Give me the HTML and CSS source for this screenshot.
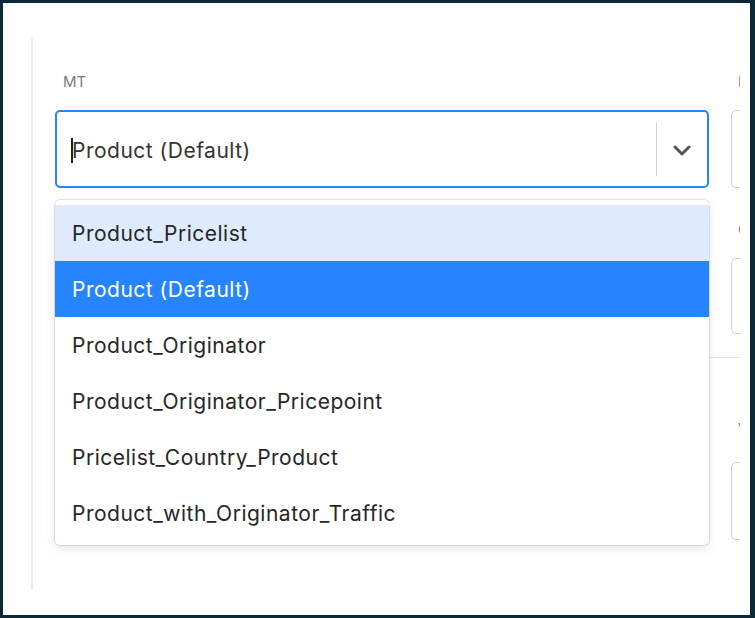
FILE: index.html
```html
<!DOCTYPE html>
<html lang="en">
<head>
<meta charset="UTF-8">
<meta name="viewport" content="width=device-width, initial-scale=1.0">
<title>MT select</title>
<link rel="stylesheet" href="styles.css">
</head>
<body>
  <div class="screen">
    <div class="panel">
      <div class="section">
        <div class="field">
          <label class="field-label">MT</label>
          <div class="select">
            <div class="select-value"><span class="caret"></span>Product (Default)</div>
            <span class="select-sep"></span>
            <svg class="chevron" width="18" height="12" viewBox="0 0 18 12">
              <polyline points="2,2 9,9 16,2" fill="none" stroke="#555" stroke-width="3" stroke-linecap="round" stroke-linejoin="round"/>
            </svg>
            <!-- открытое меню -->
            <div class="menu">
              <div class="option focused">Product_Pricelist</div>
              <div class="option selected">Product (Default)</div>
              <div class="option">Product_Originator</div>
              <div class="option">Product_Originator_Pricepoint</div>
              <div class="option">Pricelist_Country_Product</div>
              <div class="option">Product_with_Originator_Traffic</div>
            </div>
          </div>
        </div>
        <div class="side">
          <div class="field">
            <label class="field-label">Limit</label>
            <div class="input"></div>
          </div>
          <div class="field second">
            <label class="field-label">Currency</label>
            <div class="input short"></div>
          </div>
        </div>
      </div>
      <div class="divider"></div>
      <div class="section">
        <div></div>
        <div class="side">
          <div class="field third">
            <label class="field-label">Valid from</label>
            <div class="input"></div>
          </div>
        </div>
      </div>
    </div>
  </div>
</body>
</html>
```

FILE: styles.css
```css
body {
  margin: 0;
  background: #0b2838;
  font-family: Inter, "Noto Sans", sans-serif;
}

.screen {
  margin: 3px 5px 3px 3px;
  height: 612px;
  background: #fff;
  padding: 35px 10px 0 28px;
  box-sizing: border-box;
  overflow: hidden;
}

.panel {
  height: 552px;
  border-left: 2px solid #ededed;
  padding: 34px 0 0 22px;
  box-sizing: border-box;
  overflow: hidden;
}

.section {
  display: grid;
  grid-template-columns: 654px 200px;
  column-gap: 22px;
}

.field-label {
  display: block;
  height: 20px;
  line-height: 20px;
  font-size: 15px;
  color: #7a7a7a;
  margin: 0 0 18px 8px;
}

.select {
  position: relative;
  height: 78px;
  border: 2px solid #2684ff;
  border-radius: 5px;
  box-sizing: border-box;
  display: flex;
  align-items: center;
}

.select-value {
  flex: 1;
  display: flex;
  align-items: center;
  padding: 3px 0 0 14px;
  font-size: 21px;
  letter-spacing: 0.5px;
  color: #333;
}

.caret {
  width: 2px;
  height: 25px;
  background: #222;
  margin-right: -1px;
}

.select-sep {
  width: 1px;
  height: 53px;
  background: #ccc;
}

.chevron {
  margin: 4px 16px 0 16px;
}

.menu {
  position: absolute;
  top: 88px;
  left: -2px;
  right: -2px;
  background: #fff;
  border-radius: 5px;
  padding: 5px 0 4px;
  box-shadow: 0 0 0 1px rgba(0, 0, 0, 0.1), 0 4px 11px rgba(0, 0, 0, 0.1);
  z-index: 2;
}

.option {
  height: 56px;
  line-height: 58px;
  padding-left: 17px;
  font-size: 21px;
  letter-spacing: 0.5px;
  color: #262626;
}

.option.focused {
  background: #deebff;
}

.option.selected {
  background: #2684ff;
  color: #fff;
}

.input {
  height: 78px;
  border: 1px solid #ccc;
  border-radius: 5px;
  box-sizing: border-box;
}

.input.short {
  height: 76px;
}

.second .field-label {
  margin-top: 32px;
}

.side .field-label {
  margin-left: 7px;
}

.divider {
  height: 1px;
  background: #e6e6e6;
  margin: 23px 0 0 0;
}

.third .field-label {
  margin-top: 61px;
  margin-bottom: 23px;
}
```
